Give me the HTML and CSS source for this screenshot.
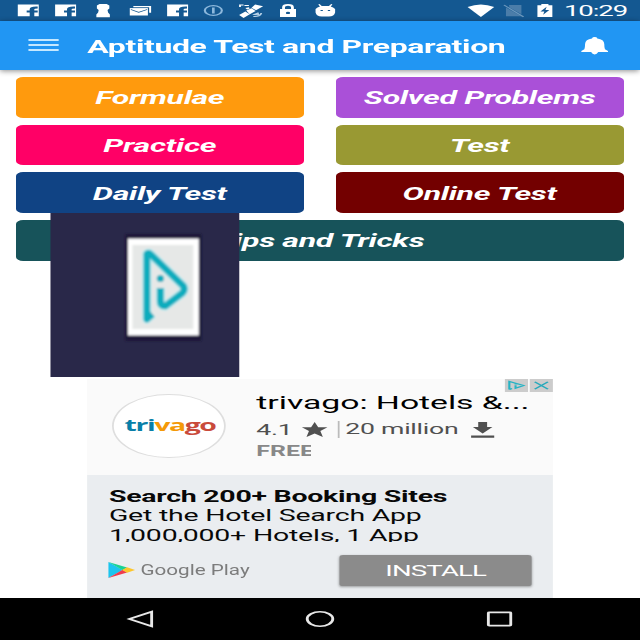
FILE: index.html
```html
<!DOCTYPE html>
<html lang="en">
<head>
<meta charset="utf-8">
<title>Aptitude Test and Preparation</title>
<link rel="stylesheet" href="styles.css">
</head>
<body>
<div class="screen">
  <header class="status">
    <div class="status-left">
      <svg class="ico" viewBox="0 0 12 13"><path class="w" d="M0 0.5H11.8V12.200H9.300V8.500H11.200V6.500H9.300V5.300Q9.300 4.500 11.200 4.500V2.500Q6.700 2.100 6.700 5.300V6.500H5V8.500H6.700V12.200H0Z"/></svg>
      <svg class="ico" viewBox="0 0 12 13"><path class="w" d="M0 0.5H11.8V12.200H9.300V8.500H11.200V6.500H9.300V5.300Q9.300 4.500 11.200 4.500V2.500Q6.700 2.100 6.700 5.300V6.500H5V8.500H6.700V12.200H0Z"/></svg>
      <svg class="ico" viewBox="0 0 12 13"><path class="w" d="M4 0H8L9.500 1.500V4.500L8.500 6L8.800 8.500L9.800 10.500V13.200H2.200V10.500L3.200 8.500L3.500 6L2.500 4.500V1.500Z"/></svg>
      <svg class="ico" viewBox="0 0 12 13"><path class="w" d="M2 2H12V8.800H10.900V3.300H2Z"/><path class="w" d="M0 4.100H10.200V11.500H0Z"/><path d="M0.600 5.500L5 8.300L9.800 5.500" fill="none" stroke="#145891" stroke-width=".7"/></svg>
      <svg class="ico" viewBox="0 0 12 13"><path class="w" d="M0 0.5H11.8V12.200H9.300V8.500H11.200V6.500H9.300V5.300Q9.300 4.500 11.200 4.500V2.500Q6.700 2.100 6.700 5.300V6.500H5V8.500H6.700V12.200H0Z"/></svg>
      <svg class="ico" viewBox="0 0 12 13"><g fill="none" stroke="#8db8dc" stroke-width="1.200"><circle cx="6" cy="6.500" r="4.800"/><path d="M6 3.500V9.500" stroke-width="1.500"/></g></svg>
      <svg class="ico wide" viewBox="0 0 14 14"><path class="w" d="M4.500 6.500L7.500 4.200L9.800 7L6.500 10.200ZM9.500 0.500L14 2.300L10 6.200L7.500 3.700ZM.5 11L4 7.500L6.500 10.300L3 14ZM.5 .5H3V1.500H1.500V3H.5ZM3.500 1H6V2H3.500ZM4 4L6 3.200L6.500 4.500L5 5.500Z"/><path d="M8.500 12.500Q12.500 13 13 9M9 10.500L11 9L11.500 11Z" fill="none" stroke="#b9d3e8" stroke-width="1"/></svg>
      <svg class="ico" viewBox="0 0 12 13"><path class="w" d="M1.500 5H10.500V13H1.500Z"/><path d="M3.500 5V3.300Q3.500 .9 6 .9T8.500 3.300V5" fill="none" stroke="#fff" stroke-width="1.600"/><circle cx="6" cy="8.900" r="1.200" fill="#145891"/></svg>
      <svg class="ico" viewBox="0 0 12 13"><path class="w" d="M.5 5Q1.500 3 3 2.500L2 .5L2.700 0L4 2H8L9.300 0L10 .5L9 2.500Q10.500 3 11.500 5V8.500Q11 12.300 8 12.600H4Q1 12.300 .5 8.500Z"/><path d="M3.300 6.500H4.600M7.400 6.500H8.700" stroke="#145891" stroke-width="1.200"/></svg>
    </div>
    <div class="status-right">
      <svg class="wifi" viewBox="0 0 15 13"><path class="w" d="M0 3Q7.500-2.200 15 3L7.500 13Z"/></svg>
      <svg class="sim" viewBox="0 0 12 13"><path fill="#4b7da9" d="M3.300 1H10.300V10.200L3.600 3.400ZM1.600 3.500L10.300 12.300H1.600Z"/><path d="M.5 1L11.500 12.800" stroke="#6c98bd" stroke-width="1"/></svg>
      <svg class="batt" viewBox="0 0 9 13"><path class="w" d="M.3 1.200H2.500V0H6.500V1.200H8.700V13H.3Z"/><path d="M5.500 2.700L2 7.500H4.200L3.500 10.800L7 6H4.800Z" fill="#145891"/></svg>
      <span class="clock">10:29</span>
    </div>
  </header>

  <div class="appbar">
    <div class="burger"><i></i><i></i><i></i></div>
    <h1 class="title">Aptitude Test and Preparation</h1>
    <svg class="bell" viewBox="0 0 15 17"><path class="w" d="M6 1.400Q6.200 0 7.500 0T9 1.400Q12.800 2.200 12.900 7Q12.900 10.500 13.300 12.300L15 14V15H0V14L1.700 12.300Q2.100 10.500 2.100 7Q2.200 2.200 6 1.400ZM5.500 15H9.500Q8.800 17.400 7.500 17.400T5.500 15Z"/></svg>
  </div>

  <main class="menu">
    <button class="btn orange"><span>Formulae</span></button>
    <button class="btn purple"><span>Solved Problems</span></button>
    <button class="btn pink"><span>Practice</span></button>
    <button class="btn olive"><span>Test</span></button>
    <button class="btn blue"><span>Daily Test</span></button>
    <button class="btn maroon"><span>Online Test</span></button>
    <button class="btn teal"><span>Tips and Tricks</span></button>
  </main>

  <svg class="overlay" viewBox="0 0 189 164" preserveAspectRatio="none">
    <defs><filter id="soft"><feGaussianBlur stdDeviation="1.200"/></filter></defs>
    <rect width="189" height="164" fill="#292849"/>
    <g filter="url(#soft)">
      <rect x="75" y="21" width="76" height="107" fill="#1b1938"/>
      <rect x="77.500" y="25.500" width="71" height="97" fill="#fff"/>
      <rect x="82" y="32" width="61" height="84" fill="#e6e8e7"/>
      <path d="M102 101L96.500 106V41Q98 39 101 42L133 73Q135 77 132 80L115 93Q110 93 110 88V75" fill="none" stroke="#aeeaf0" stroke-width="9" stroke-linejoin="round"/>
      <path d="M102 101L96.500 106V41Q98 39 101 42L133 73Q135 77 132 80L115 93Q110 93 110 88V75" fill="none" stroke="#08acbd" stroke-width="6.500" stroke-linejoin="round"/>
      <circle cx="110" cy="65.500" r="3.600" fill="#08acbd"/>
    </g>
  </svg>

  <section class="ad">
    <div class="choices">
      <svg viewBox="0 0 13 13"><path d="M2.500 10.500V2.500L10.500 6.500L6 9.200V6.200M6 4.500V5.500M2.500 10.500L4 9.500" fill="none" stroke="#25b3c4" stroke-width="1.200"/></svg>
      <svg viewBox="0 0 13 13"><path d="M2.800 2.800L10.200 10.200M10.200 2.800L2.800 10.200" fill="none" stroke="#25a9bb" stroke-width="1.200"/></svg>
    </div>
    <div class="ad-head">
      <div class="logo"><span class="wordmark"><b class="c1">tri</b><b class="c2">va</b><b class="c3">go</b></span></div>
      <div class="info">
        <div class="name">trivago: Hotels &amp;...</div>
        <div class="stats">
          <span class="rating">4.1</span>
          <svg class="star" viewBox="0 0 14 15"><path fill="#505050" d="M7 0L9 5.200H14.200L10.200 9L11.600 15L7 11.600L2.400 15L3.800 9L-.2 5.200H5Z"/></svg>
          <span class="count">20 million</span>
          <svg class="down" viewBox="0 0 13 16"><path fill="#505050" d="M4 0H9V5H12L6.500 11.500L1 5H4ZM0 13.500H13V15.700H0Z"/></svg>
        </div>
        <div class="free">FREE</div>
      </div>
    </div>
    <div class="ad-body">
      <div class="lines">
        <div class="l1">Search 200+ Booking Sites</div>
        <div class="l2">Get the Hotel Search App</div>
        <div class="l3">1,000,000+ Hotels, 1 App</div>
      </div>
      <div class="ad-foot">
        <svg class="play" viewBox="0 0 15 16"><path fill="#1bc5ef" d="M0 0V16L8 8Z"/><path fill="#19d394" d="M0 0L10.500 5.500L8 8.300Z"/><path fill="#ef3b4e" d="M0 16L10.500 10.500L8 7.800Z"/><path fill="#fdc62c" d="M10.500 5.300L15 8L10.500 10.700L7.700 8Z"/></svg>
        <span class="gplay">Google Play</span>
        <button class="install"><span>INSTALL</span></button>
      </div>
    </div>
  </section>

  <nav class="nav">
    <svg viewBox="0 0 16 18"><path d="M1.700 9L14.300 1.700V16.300Z"/></svg>
    <svg viewBox="0 0 16 18"><circle cx="8" cy="9" r="7.200"/></svg>
    <svg viewBox="0 0 16 18"><rect x="1.700" y="2.400" width="12.600" height="13.200" rx=".5"/></svg>
  </nav>
</div>
</body>
</html>
```

FILE: styles.css
```css
* { box-sizing: border-box; margin: 0; padding: 0; }

html, body { width: 640px; height: 640px; overflow: hidden; background: #fff; }

/* A 360 x 640 phone layout, widened to fill the square window. */
.screen {
  position: relative;
  width: 360px;
  height: 640px;
  display: flex;
  flex-direction: column;
  transform: scaleX(1.77778);
  transform-origin: 0 0;
  font-family: Roboto, "Liberation Sans", sans-serif;
  white-space: nowrap;
  background: #fff;
}

svg { display: block; flex: none; overflow: visible; }
.w { fill: #fff; }
button { border: 0; font-family: inherit; color: #fff; }

.status {
  height: 21px;
  flex: none;
  display: flex;
  justify-content: space-between;
  align-items: center;
  padding: 0 7.500px 0 10px;
  background: #145891;
}
.status-left { display: flex; gap: 8.900px; }
.ico { width: 12px; height: 13px; }
.ico.wide { width: 14px; height: 14px; margin: 0 -1px; }
.status-right { display: flex; align-items: center; }
.wifi { width: 15px; height: 13px; }
.sim { width: 12px; height: 13px; margin-left: 5.500px; }
.batt { width: 9px; height: 13px; margin-left: 6.800px; }
.clock { font-size: 15.500px; line-height: 21px; color: #fff; margin-left: 6px; width: 35.300px; letter-spacing: -.6px; padding-top: 1px; }

.appbar {
  position: relative;
  height: 49px;
  flex: none;
  display: flex;
  align-items: center;
  padding: 0 17.600px 0 16.400px;
  background: #2196f3;
  box-shadow: 0 1px 4px rgba(0, 0, 0, .45);
}
.burger { display: flex; flex-direction: column; gap: 3px; width: 16.400px; padding-bottom: 1px; }
.burger i { height: 2px; background: #c5e8ff; }
.title { flex: 1; margin-left: 16.300px; font-size: 18px; font-weight: 700; line-height: 24px; color: #fff; padding-top: 3px; letter-spacing: -.22px; }
.bell { width: 15px; height: 17px; }

.menu {
  display: grid;
  grid-template-columns: 1fr 1fr;
  grid-auto-rows: 40.700px;
  gap: 7px 17.200px;
  padding: 7px 8.700px 0;
}
.btn { border-radius: 4px; font-size: 18px; font-style: italic; font-weight: 700; line-height: 24px; letter-spacing: -.17px; padding: 2px .3px 0 0; }
.orange { background: #ff9a0d; }
.purple { background: #aa50d8; }
.pink { background: #ff0066; }
.olive { background: #999933; }
.blue { background: #104384; }
.maroon { background: #730000; }
.teal { background: #17535a; grid-column: span 2; }

.overlay { position: absolute; left: 28px; top: 213px; width: 106.200px; height: 164px; transform: translateX(.4px); }

.ad {
  position: relative;
  width: 262.200px;
  height: 219px;
  margin: auto auto 0 48.900px;
  display: flex;
  flex-direction: column;
  background: #fafafa;
}
.choices { position: absolute; top: 0; right: 0; display: flex; gap: 1.200px; }
.choices svg { width: 13px; height: 13px; background: #ccc; }
.ad-head { height: 96px; display: flex; padding: 15px 0 0 14.500px; }
.logo {
  width: 63.500px;
  height: 64px;
  border: 1px solid #dedede;
  border-radius: 50%;
  background: #fff;
  display: flex;
  align-items: center;
  justify-content: center;
}
.wordmark { font-family: "Open Sans", sans-serif; font-size: 16px; line-height: 20px; letter-spacing: -.8px; padding: 0 0 2px 1px; }
.wordmark b { font-weight: 700; }
.c1 { color: #087fa8; }
.c2 { color: #f49a08; }
.c3 { color: #c94a3b; }
.info { margin-left: 17.300px; margin-top: -4px; }
.name { font-size: 19px; line-height: 26px; color: #000; letter-spacing: -.03px; }
.stats { display: flex; align-items: center; height: 27px; font-size: 15px; color: #505050; letter-spacing: -.15px; }
.rating { width: 26px; }
.star { width: 14px; height: 15px; margin-right: 5.500px; }
.count { border-left: 1px solid #bbb; padding-left: 3.500px; line-height: 17px; width: 75px; }
.down { width: 13px; height: 16px; }
.free { width: 31.300px; overflow: hidden; font-size: 14px; font-weight: 700; line-height: 16px; color: #888; }

.ad-body { flex: 1; background: #eaedf0; padding: 11px 12px 0 12.400px; }
.lines { height: 56px; overflow: hidden; font-size: 16px; color: #080808; letter-spacing: -.12px; }
.l1 { font-weight: 700; line-height: 21px; letter-spacing: -.14px; }
.l2 { line-height: 17px; }
.l3 { line-height: 23px; }
.ad-foot { display: flex; align-items: center; height: 32px; margin-top: 12px; }
.play { width: 15px; height: 16px; }
.gplay { margin-left: 3.200px; width: 62px; font-size: 14px; color: #7c7c7c; transform: scaleX(.83); transform-origin: 0 50%; }
.install {
  width: 108px;
  height: 31px;
  margin-left: auto;
  border-radius: 2px;
  background: #8b8b8b;
  box-shadow: 0 1px 2px rgba(0, 0, 0, .35);
  font-size: 15.500px;
  letter-spacing: -.45px;
  padding-top: 2px;
}

.nav { height: 42px; flex: none; background: #000; display: flex; justify-content: center; gap: 85.200px; align-items: center; }
.nav svg { width: 16px; height: 18px; fill: none; stroke: #e8e8e8; stroke-width: 1.600; }
```
